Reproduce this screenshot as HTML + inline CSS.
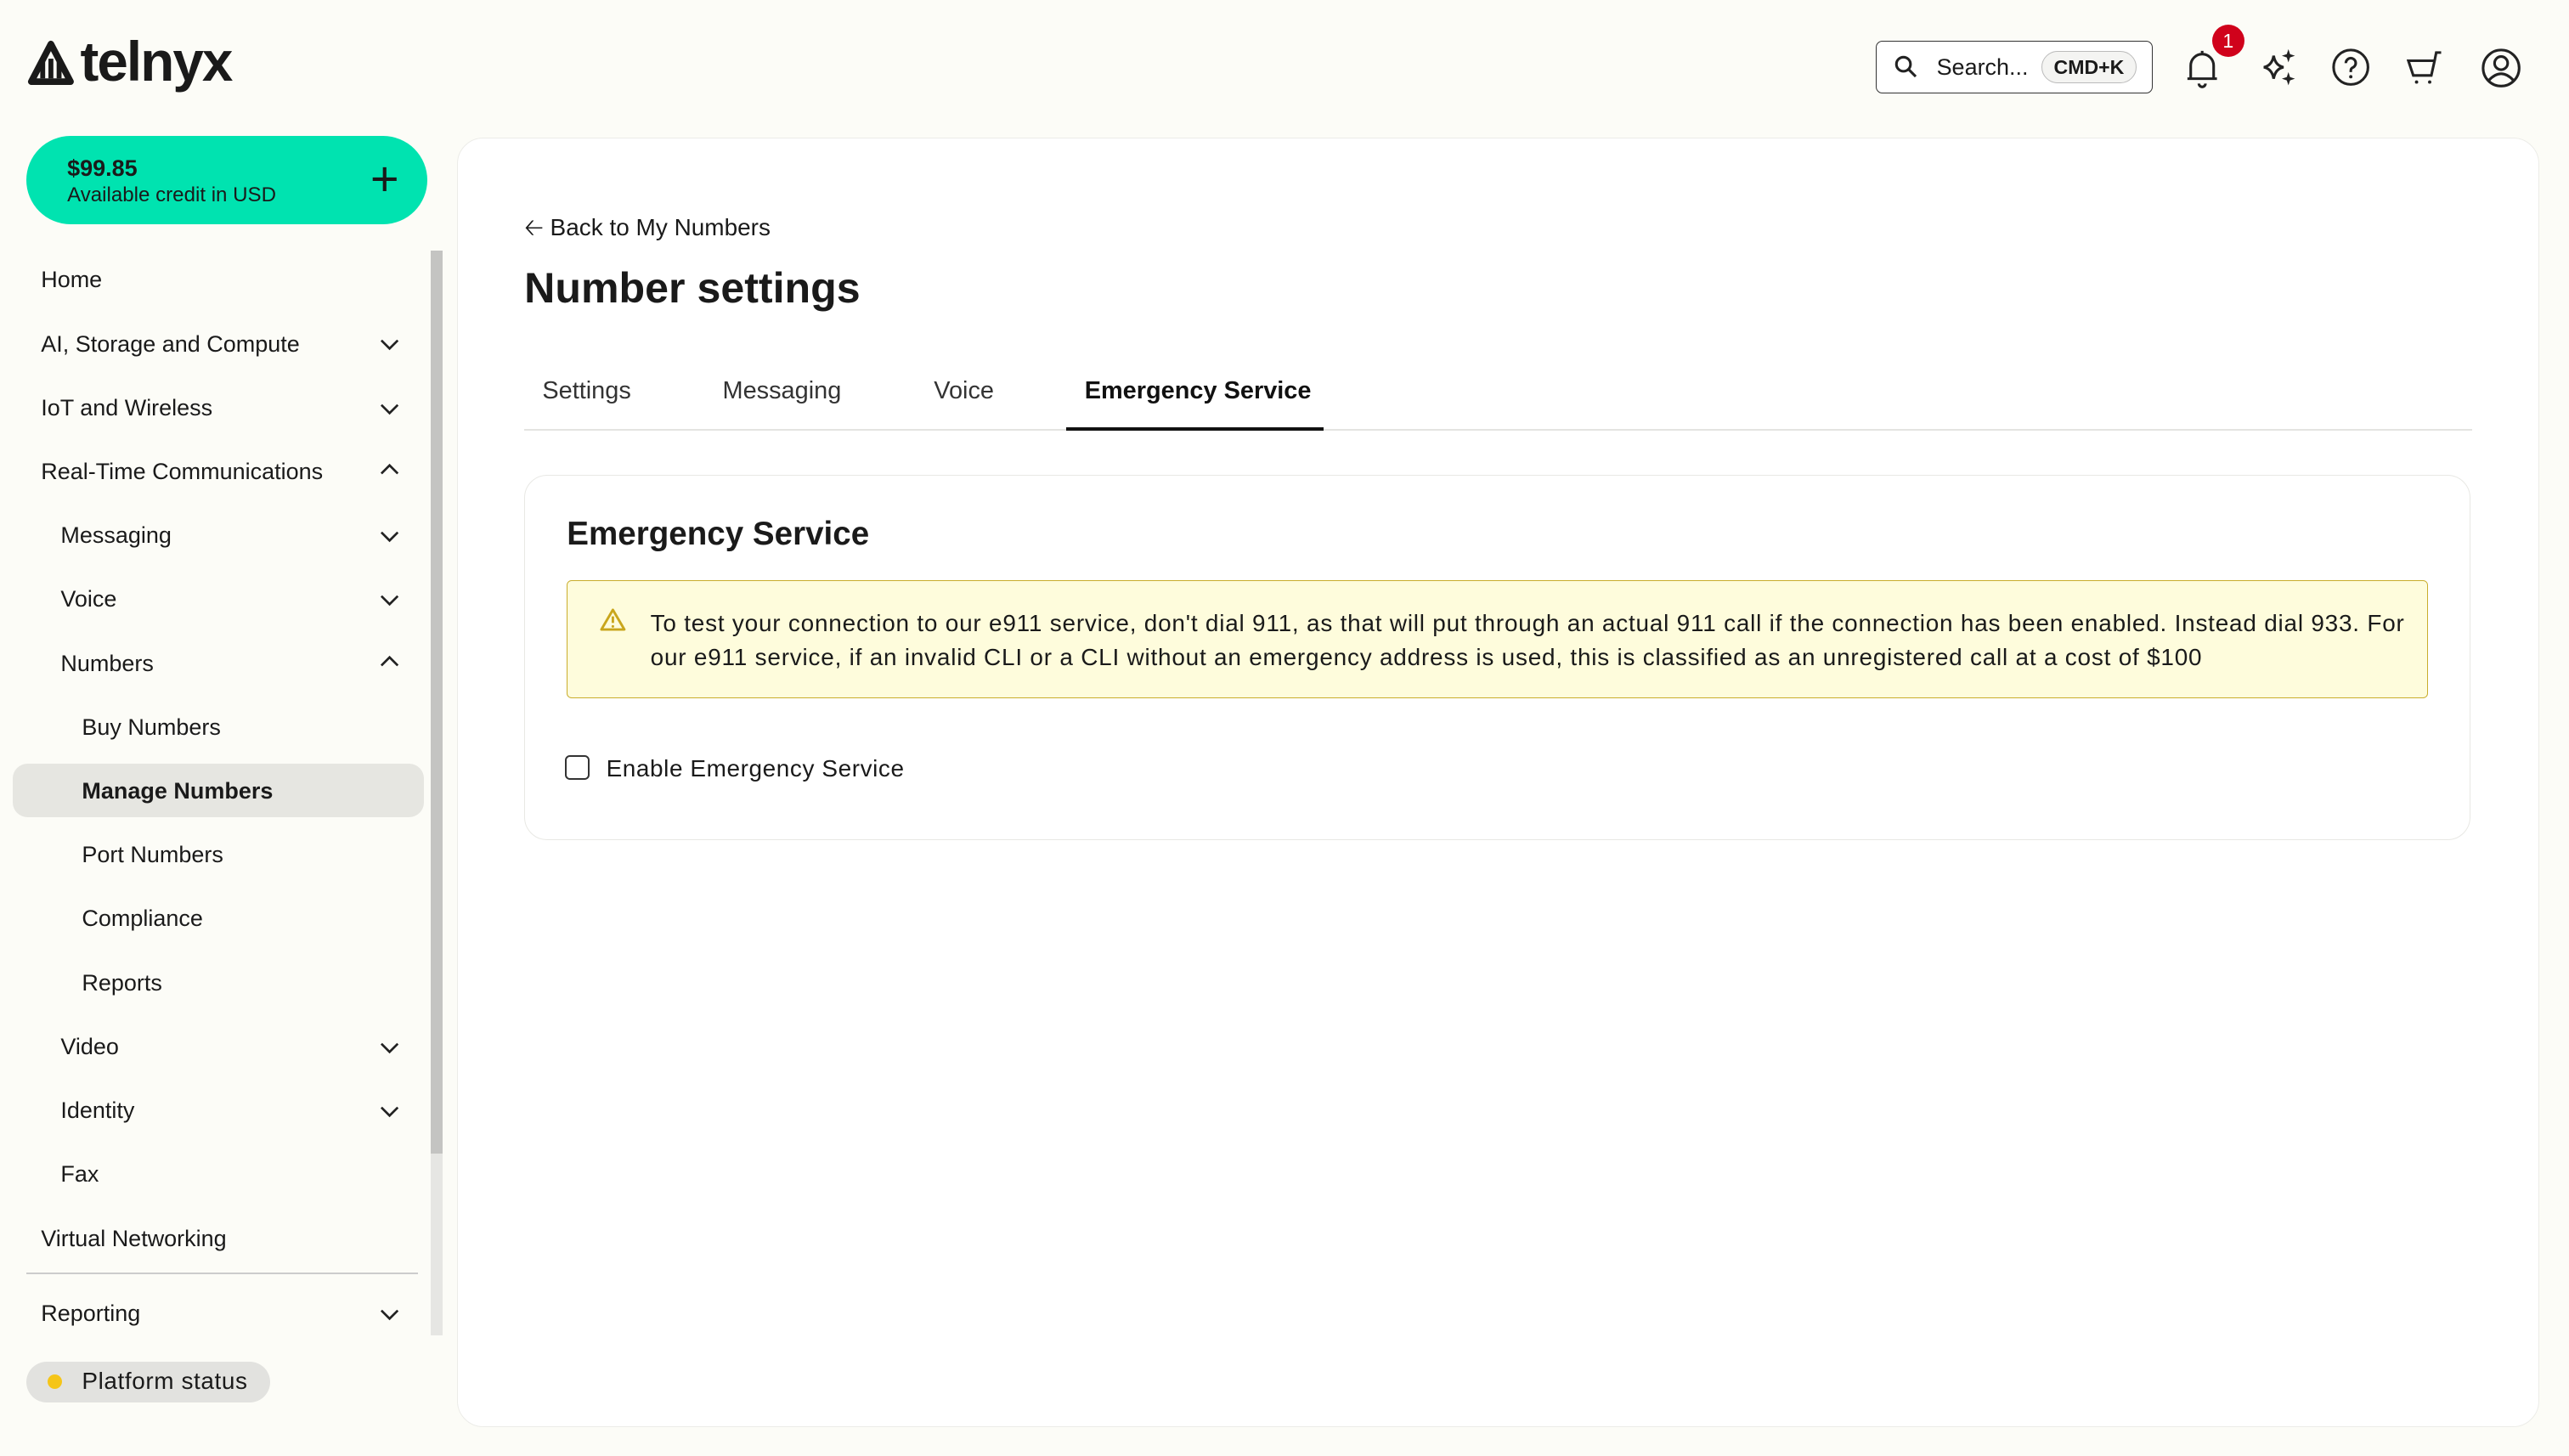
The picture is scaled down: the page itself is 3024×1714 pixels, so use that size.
<!DOCTYPE html>
<html><head><meta charset="utf-8"><style>
html,body{margin:0;padding:0}
body{width:3024px;height:1714px;overflow:hidden;background:#fcfcf7;font-family:"Liberation Sans",sans-serif;color:#1a1a1a}
#z{zoom:1.92857;width:1568px;height:889px;position:relative}
.a{position:absolute}
.nav{position:absolute;left:25px;font-size:14px;color:#1a1a1a}
.chev{position:absolute;left:232px;width:12px;height:12px}
.tab{position:absolute;top:230px;font-size:15px;color:#333}
</style></head><body><div id="z">
<svg class="a" style="left:16px;top:24px" width="30" height="32" viewBox="0 0 30 32"><path d="M15 3 L3 26 H27 Z" fill="none" stroke="#1a1a1a" stroke-width="4" stroke-linejoin="round"/><path d="M10 14 v10 M15 12 v12 M20 14 v10" stroke="#1a1a1a" stroke-width="3"/></svg>
<div class="a" style="left:49px;top:18px;font-size:34px;font-weight:700;letter-spacing:-1px;color:#1a1a1a">telnyx</div>
<div class="a" style="left:16px;top:83px;width:245px;height:54px;border-radius:27px;background:#00e3b0"></div>
<div class="a" style="left:41px;top:95px;font-size:14px;font-weight:700">$99.85</div>
<div class="a" style="left:41px;top:112px;font-size:12.5px">Available credit in USD</div>
<div class="a" style="left:226px;top:93px;font-size:30px;line-height:34px;font-weight:300">+</div>
<div class="a" style="left:263px;top:153px;width:7px;height:662px;background:#e6e6e3"></div>
<div class="a" style="left:263px;top:153px;width:7px;height:551px;background:#c4c4c2"></div>
<div class="a" style="left:8px;top:466px;width:251px;height:33px;border-radius:9px;background:#e6e6e1"></div>
<div class="nav" style="top:163px">Home</div>
<div class="nav" style="top:202px">AI, Storage and Compute</div>
<div class="nav" style="top:241px">IoT and Wireless</div>
<div class="nav" style="top:280px">Real-Time Communications</div>
<div class="nav" style="top:319px;left:37px">Messaging</div>
<div class="nav" style="top:358px;left:37px">Voice</div>
<div class="nav" style="top:397px;left:37px">Numbers</div>
<div class="nav" style="top:436px;left:50px">Buy Numbers</div>
<div class="nav" style="top:475px;left:50px;font-weight:700">Manage Numbers</div>
<div class="nav" style="top:514px;left:50px">Port Numbers</div>
<div class="nav" style="top:553px;left:50px">Compliance</div>
<div class="nav" style="top:592px;left:50px">Reports</div>
<div class="nav" style="top:631px;left:37px">Video</div>
<div class="nav" style="top:670px;left:37px">Identity</div>
<div class="nav" style="top:709px;left:37px">Fax</div>
<div class="nav" style="top:748px">Virtual Networking</div>
<div class="a" style="left:16px;top:777px;width:239px;height:1px;background:#ccc"></div>
<div class="nav" style="top:794px">Reporting</div>
<svg class="chev" style="top:204px" viewBox="0 0 12 12"><path d="M1 4l5 5 5-5" fill="none" stroke="#222" stroke-width="1.4"/></svg>
<svg class="chev" style="top:243px" viewBox="0 0 12 12"><path d="M1 4l5 5 5-5" fill="none" stroke="#222" stroke-width="1.4"/></svg>
<svg class="chev" style="top:281px" viewBox="0 0 12 12"><path d="M1 8l5-5 5 5" fill="none" stroke="#222" stroke-width="1.4"/></svg>
<svg class="chev" style="top:321px" viewBox="0 0 12 12"><path d="M1 4l5 5 5-5" fill="none" stroke="#222" stroke-width="1.4"/></svg>
<svg class="chev" style="top:360px" viewBox="0 0 12 12"><path d="M1 4l5 5 5-5" fill="none" stroke="#222" stroke-width="1.4"/></svg>
<svg class="chev" style="top:398px" viewBox="0 0 12 12"><path d="M1 8l5-5 5 5" fill="none" stroke="#222" stroke-width="1.4"/></svg>
<svg class="chev" style="top:633px" viewBox="0 0 12 12"><path d="M1 4l5 5 5-5" fill="none" stroke="#222" stroke-width="1.4"/></svg>
<svg class="chev" style="top:672px" viewBox="0 0 12 12"><path d="M1 4l5 5 5-5" fill="none" stroke="#222" stroke-width="1.4"/></svg>
<svg class="chev" style="top:796px" viewBox="0 0 12 12"><path d="M1 4l5 5 5-5" fill="none" stroke="#222" stroke-width="1.4"/></svg>
<div class="a" style="left:16px;top:831px;width:149px;height:25px;border-radius:13px;background:#e2e2df"></div>
<div class="a" style="left:29px;top:839px;width:9px;height:9px;border-radius:50%;background:#f5c518"></div>
<div class="a" style="left:50px;top:835px;font-size:14.5px;letter-spacing:0.3px">Platform status</div>
<div class="a" style="left:1145px;top:25px;width:168px;height:31px;border:1px solid #333;border-radius:4px;background:#fff"></div>
<svg class="a" style="left:1156px;top:33px" width="15" height="15" viewBox="0 0 15 15"><circle cx="6" cy="6" r="4.3" fill="none" stroke="#222" stroke-width="1.6"/><path d="M9 9l4.5 4.5" stroke="#222" stroke-width="1.6"/></svg>
<div class="a" style="left:1182px;top:33px;font-size:14px">Search...</div>
<div class="a" style="left:1246px;top:31px;width:57px;height:19px;border:1px solid #bbb;border-radius:10px;background:#f4f4f2;font-size:12px;font-weight:700;text-align:center;line-height:19px">CMD+K</div>
<svg class="a" style="left:1333px;top:29px" width="22" height="26" viewBox="0 0 22 26"><path d="M4 19 V11 a7 7 0 0 1 14 0 V19 H2 H20 M11 2v2 M9 22a2 2 0 0 0 4 0" fill="none" stroke="#222" stroke-width="1.6"/></svg>
<div class="a" style="left:1350px;top:15px;width:20px;height:20px;border-radius:50%;background:#d0021b;color:#fff;font-size:12px;text-align:center;line-height:20px">1</div>
<svg class="a" style="left:1379px;top:29px" width="24" height="24" viewBox="0 0 24 24"><path d="M9 5 Q10 11 15 12 Q10 13 9 19 Q8 13 3 12 Q8 11 9 5Z" fill="none" stroke="#222" stroke-width="1.6"/><path d="M18 1 l1 3 3 1 -3 1 -1 3 -1-3 -3-1 3-1z M18 15 l1 3 3 1 -3 1 -1 3 -1-3 -3-1 3-1z" fill="#222"/></svg>
<svg class="a" style="left:1423px;top:29px" width="24" height="24" viewBox="0 0 24 24"><circle cx="12" cy="12" r="10.5" fill="none" stroke="#222" stroke-width="1.6"/><path d="M9 9.5a3 3 0 1 1 4 2.8c-.8.4-1 1-1 2v.7" fill="none" stroke="#222" stroke-width="1.6"/><circle cx="12" cy="17.8" r="1" fill="#222"/></svg>
<svg class="a" style="left:1469px;top:30px" width="24" height="24" viewBox="0 0 24 24"><path d="M1 7 H17 L15 16 H4 Z M17 7 L18 2 H21" fill="none" stroke="#222" stroke-width="1.6"/><circle cx="6" cy="20" r="1" fill="#222"/><circle cx="14" cy="20" r="1" fill="#222"/></svg>
<svg class="a" style="left:1514px;top:29px" width="25" height="25" viewBox="0 0 25 25"><circle cx="12.5" cy="12.5" r="11" fill="none" stroke="#222" stroke-width="1.6"/><circle cx="12.5" cy="9.5" r="4" fill="none" stroke="#222" stroke-width="1.6"/><path d="M5 20 Q12.5 12 20 20" fill="none" stroke="#222" stroke-width="1.6"/></svg>
<div class="a" style="left:279px;top:84px;width:1270px;height:786px;background:#fff;border:1px solid #ececE8;border-radius:16px"></div>
<div class="a" style="left:320px;top:128px;font-size:14.5px">&#129120; Back to My Numbers</div>
<div class="a" style="left:320px;top:161px;font-size:26px;font-weight:700">Number settings</div>
<div class="tab" style="left:331px">Settings</div>
<div class="tab" style="left:441px">Messaging</div>
<div class="tab" style="left:570px">Voice</div>
<div class="tab" style="left:662px;font-weight:700;color:#111">Emergency Service</div>
<div class="a" style="left:320px;top:262px;width:1189px;height:1px;background:#e4e4e1"></div>
<div class="a" style="left:651px;top:261px;width:157px;height:2px;background:#111"></div>
<div class="a" style="left:320px;top:290px;width:1187px;height:222px;border:1px solid #e8e8e4;border-radius:14px"></div>
<div class="a" style="left:346px;top:315px;font-size:20px;font-weight:700">Emergency Service</div>
<div class="a" style="left:346px;top:354px;width:1135px;height:71px;background:#fefcdc;border:1px solid #c9ad2c;border-radius:3px"></div>
<svg class="a" style="left:366px;top:371px" width="16" height="15" viewBox="0 0 16 15"><path d="M8 1.5 L15 13.5 H1 Z" fill="none" stroke="#c9a61c" stroke-width="1.5" stroke-linejoin="round"/><path d="M8 5.5v4" stroke="#c9a61c" stroke-width="1.5"/><circle cx="8" cy="11.6" r=".8" fill="#c9a61c"/></svg>
<div class="a" style="left:397px;top:370px;width:1075px;font-size:14.5px;line-height:21px;letter-spacing:0.4px">To test your connection to our e911 service, don't dial 911, as that will put through an actual 911 call if the connection has been enabled. Instead dial 933. For our e911 service, if an invalid CLI or a CLI without an emergency address is used, this is classified as an unregistered call at a cost of $100</div>
<div class="a" style="left:345px;top:461px;width:13px;height:13px;border:1.5px solid #333;border-radius:3px"></div>
<div class="a" style="left:370px;top:461px;font-size:14.5px;letter-spacing:0.3px">Enable Emergency Service</div>
</div></body></html>
